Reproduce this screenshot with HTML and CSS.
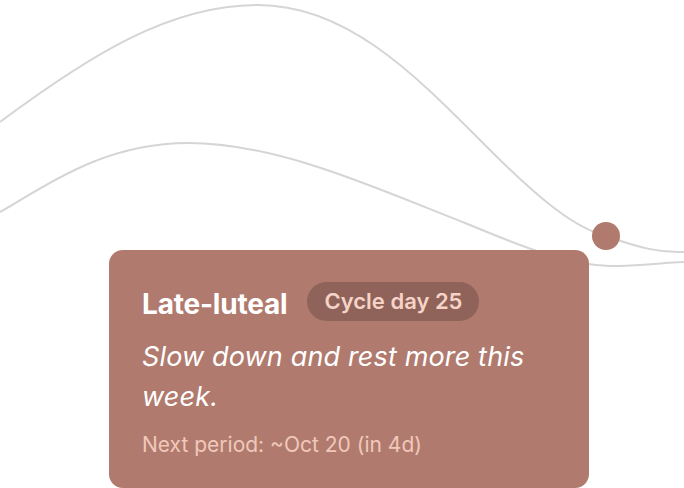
FILE: index.html
```html
<!DOCTYPE html>
<html lang="en">
<head>
    <meta charset="UTF-8">
    <meta name="viewport" content="width=device-width, initial-scale=1.0">
    <title>Cycle Phase</title>
    <link rel="stylesheet" href="styles.css">
</head>
<body>
    <div class="stage">
        <!-- hormone curves behind the phase card -->
        <svg class="chart" width="684" height="488" viewBox="0 0 684 488">
            <path class="curve" d="M0,122 C90,55 170,5 258,5 C350,5 420,80 490,150 C540,200 575,228 606,236 C640,248 660,253 684,252" />
            <path class="curve" d="M0,212 C40,190 100,143 188,143 C280,143 380,190 470,225 C530,250 570,265 610,266 C640,266 660,263 684,262" />
            <circle class="marker" cx="606" cy="236" r="14" />
        </svg>

        <div class="card">
            <div class="card-head">
                <span class="phase">Late-luteal</span>
                <span class="badge">Cycle day 25</span>
            </div>
            <p class="advice">Slow down and rest more this week.</p>
            <p class="next">Next period: ~Oct 20 (in 4d)</p>
        </div>
    </div>
</body>
</html>
```

FILE: styles.css
```css
body {
    margin: 0;
    background-color: #fff;
    font-family: 'Inter', 'Noto Sans', sans-serif;
}

.stage {
    position: relative;
    width: 684px;
    height: 488px;
    overflow: hidden;
}

.chart {
    position: absolute;
    top: 0;
    left: 0;
}

.curve {
    fill: none;
    stroke: #d5d5d5;
    stroke-width: 2;
}

.marker {
    fill: #b07b6e;
}

/* Phase card */
.card {
    position: relative;
    box-sizing: border-box;
    width: 480px;
    height: 238px;
    margin: 250px 0 0 109px;
    padding: 32px 33px;
    background-color: #b07b6e;
    border-radius: 14px;
}

.card-head {
    display: flex;
    align-items: center;
    gap: 20px;
}

.phase {
    margin-top: 5px;
    color: #fff;
    font-size: 28px;
    font-weight: 700;
    letter-spacing: -0.2px;
}

.badge {
    display: inline-block;
    height: 39px;
    line-height: 39px;
    padding: 0 17px;
    border-radius: 20px;
    background-color: #8f6359;
    color: #f6d3c8;
    font-size: 22px;
    font-weight: 600;
}

.advice {
    margin: 16px 0 0;
    color: #fff;
    font-size: 27px;
    font-style: italic;
    line-height: 40px;
    letter-spacing: 0.15px;
}

.next {
    margin: 15px 0 0;
    color: #f1c8bb;
    font-size: 21px;
}
```
